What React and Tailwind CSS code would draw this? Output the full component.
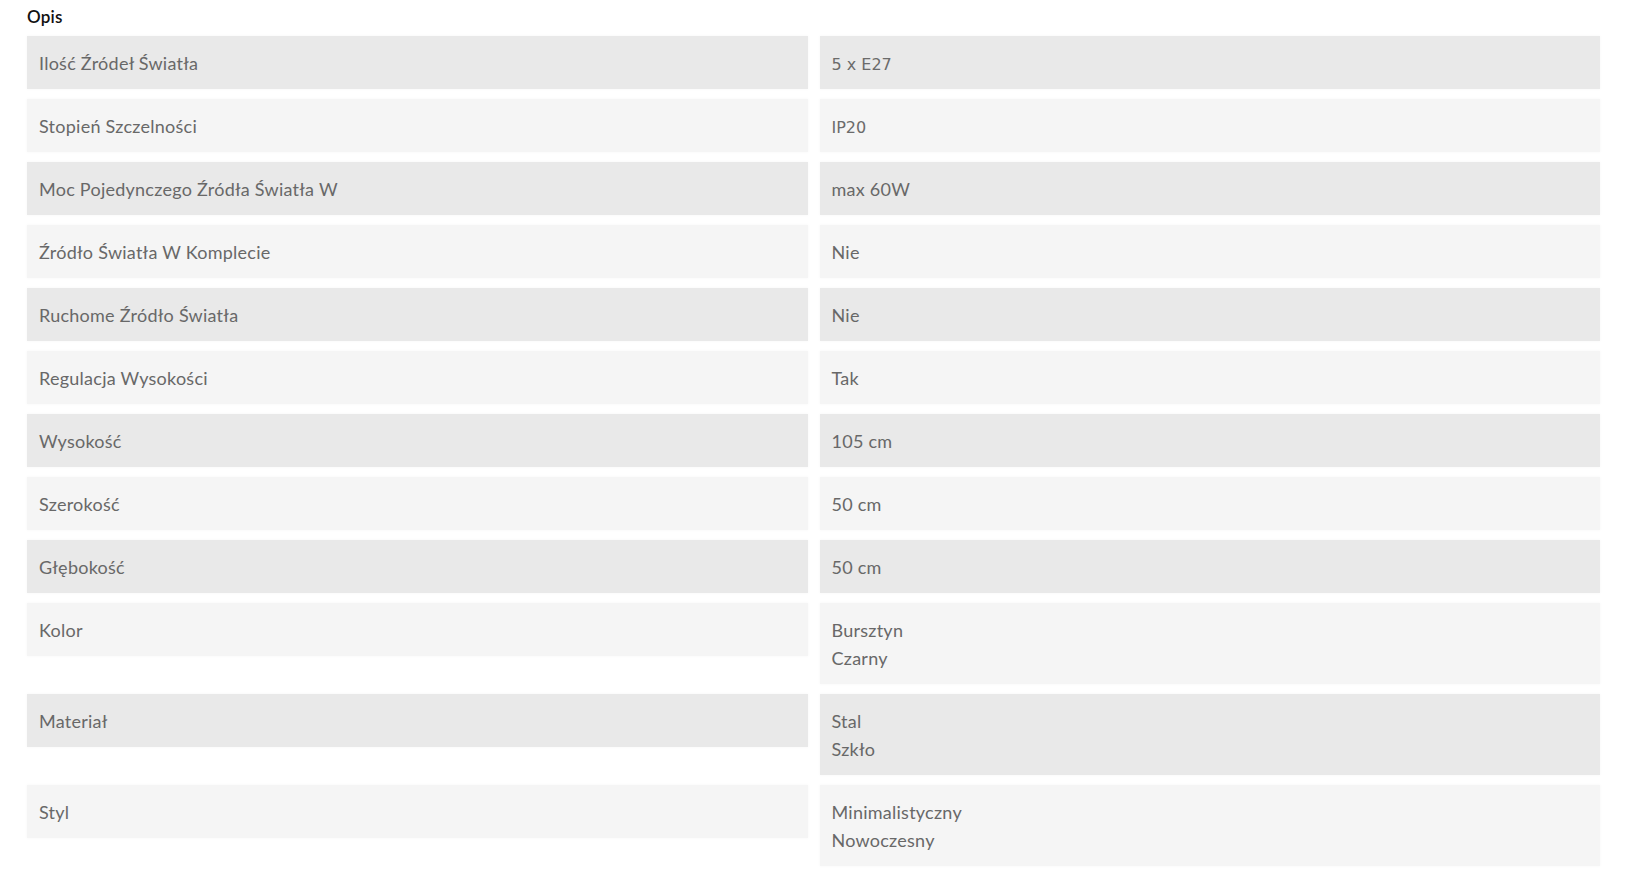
import React from "react";

const specs = [
  { label: "Ilość Źródeł Światła", values: ["5 x E27"], plain: true },
  { label: "Stopień Szczelności", values: ["IP20"], plain: true },
  { label: "Moc Pojedynczego Źródła Światła W", values: ["max 60W"] },
  { label: "Źródło Światła W Komplecie", values: ["Nie"] },
  { label: "Ruchome Źródło Światła", values: ["Nie"] },
  { label: "Regulacja Wysokości", values: ["Tak"] },
  { label: "Wysokość", values: ["105 cm"] },
  { label: "Szerokość", values: ["50 cm"] },
  { label: "Głębokość", values: ["50 cm"] },
  { label: "Kolor", values: ["Bursztyn", "Czarny"] },
  { label: "Materiał", values: ["Stal", "Szkło"] },
  { label: "Styl", values: ["Minimalistyczny", "Nowoczesny"] },
];

const Cell = ({ dark, children }) => (
  <div
    className={
      "px-3 pt-[13px] pb-[12px] leading-[28px] text-[18px] tracking-[0.25px] text-[#686868] shadow-[0_0_3px_rgba(0,0,0,0.04)] " +
      (dark ? "bg-[#e9e9e9]" : "bg-[#f5f5f5]")
    }
  >
    {children}
  </div>
);

const App = () => {
  return (
    <div className="min-h-screen bg-white px-[27px] pt-[6px] font-['Lato',sans-serif]">
      <h2 className="text-[17px] font-semibold leading-[22px] tracking-[0.2px] text-[#111111] mb-[8px]">Opis</h2>
      <div className="grid grid-cols-2 gap-x-[12px] gap-y-[10px] items-start">
        {specs.map((row, i) => (
          <React.Fragment key={row.label}>
            <Cell dark={i % 2 === 0}>{row.label}</Cell>
            <Cell dark={i % 2 === 0}>
              {row.values.map((v) => (
                <div
                  key={v}
                  className={
                    row.plain
                      ? "pt-[4px] leading-[24px] font-['DejaVu_Sans',sans-serif] text-[16px] tracking-normal text-[#6b6b6b]"
                      : ""
                  }
                >
                  {v}
                </div>
              ))}
            </Cell>
          </React.Fragment>
        ))}
      </div>
    </div>
  );
};

export default App;
